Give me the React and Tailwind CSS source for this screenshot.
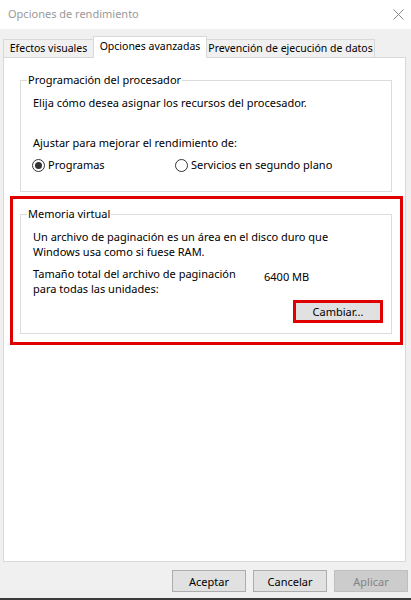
import React from "react";

const font = "font-['Segoe_UI','Noto_Sans',sans-serif]";

function Radio({ checked, label, className = "" }) {
  return (
    <label className={`flex items-center gap-[3px] ${className}`}>
      <span className="w-[13px] h-[13px] rounded-full border border-[#333] bg-white flex items-center justify-center">
        {checked && <span className="w-[7px] h-[7px] rounded-full bg-[#333]" />}
      </span>
      <span>{label}</span>
    </label>
  );
}

function GroupBox({ title, children, className = "" }) {
  return (
    <fieldset className={`w-[372px] border border-[#dcdcdc] px-[6px] ${className}`}>
      <legend className="px-[1px] leading-[16px]">{title}</legend>
      {children}
    </fieldset>
  );
}

export default function App() {
  return (
    <div className={`w-[411px] h-[600px] bg-[#f0f0f0] flex flex-col text-[11px] text-black ${font}`}>
      {/* title bar */}
      <div className="h-[29px] bg-white flex items-center justify-between pl-[8px] pr-[7px]">
        <span className="text-[#999] text-[11px]">Opciones de rendimiento</span>
        <svg width="11" height="11" viewBox="0 0 11 11">
          <path d="M0.5 0.5 L10.5 10.5 M10.5 0.5 L0.5 10.5" stroke="#8a8a8a" strokeWidth="1" />
        </svg>
      </div>

      {/* tabs */}
      <div className="mt-[7px] h-[21px] flex items-end pl-[3px] whitespace-nowrap text-[10.5px]">
        <div className="w-[91px] h-[18px] border-l border-t border-r border-[#d9d9d9] bg-[#f0f0f0] flex items-center justify-center leading-none">
          Efectos visuales
        </div>
        <div className="relative z-10 -ml-px -mb-px w-[114px] h-[22px] border-l border-t border-r border-[#d9d9d9] bg-white flex items-center justify-center pb-[2px] leading-none">
          Opciones avanzadas
        </div>
        <div className="-ml-px w-[169px] h-[18px] border-l border-t border-r border-[#d9d9d9] bg-[#f0f0f0] flex items-center justify-center leading-none">
          Prevención de ejecución de datos
        </div>
      </div>

      {/* panel */}
      <div className="ml-[3px] w-[403px] h-[505px] bg-white border border-[#d9d9d9] pt-[14px]">
        <GroupBox title="Programación del procesador" className="ml-[16px] pb-[18px]">
          <div className="pl-[6px] leading-[16px]">
            <p className="mt-[7px]">Elija cómo desea asignar los recursos del procesador.</p>
            <p className="mt-[24px]">Ajustar para mejorar el rendimiento de:</p>
            <div className="mt-[6px] flex -ml-px">
              <Radio checked label="Programas" className="w-[143px]" />
              <Radio label="Servicios en segundo plano" />
            </div>
          </div>
        </GroupBox>

        <div className="mt-[4px] ml-[6px] w-[393px] border-[3px] border-[#e00000] pt-[7px] pb-[8px] pl-[7px]">
          <GroupBox title="Memoria virtual" className="pb-[10px]">
            <div className="pl-[6px] pr-[2px]">
              <p className="mt-[7px] leading-[15px]">
                Un archivo de paginación es un área en el disco duro que
                <br />
                Windows usa como si fuese RAM.
              </p>
              <div className="mt-[7px] flex leading-[15px]">
                <p className="w-[231px]">
                  Tamaño total del archivo de paginación
                  <br />
                  para todas las unidades:
                </p>
                <span className="pt-[3px]">6400 MB</span>
              </div>
              <div className="mt-[4px] flex justify-end">
                <button className="w-[90px] h-[23px] border-[3px] border-[#e00000] bg-[#e1e1e1] flex items-center justify-center leading-none">
                  Cambiar...
                </button>
              </div>
            </div>
          </GroupBox>
        </div>
      </div>

      {/* dialog buttons */}
      <div className="mt-[8px] flex gap-[7px] pl-[172px]">
        <button className="w-[74px] h-[22px] border border-[#adadad] bg-[#e1e1e1] leading-none">Aceptar</button>
        <button className="w-[74px] h-[22px] border border-[#adadad] bg-[#e1e1e1] leading-none">Cancelar</button>
        <button className="w-[74px] h-[22px] border border-[#bfbfbf] bg-[#cccccc] text-[#838383] leading-none">Aplicar</button>
      </div>

      <div className="mt-auto h-[2px] bg-[#3a3a3a]" />
    </div>
  );
}
